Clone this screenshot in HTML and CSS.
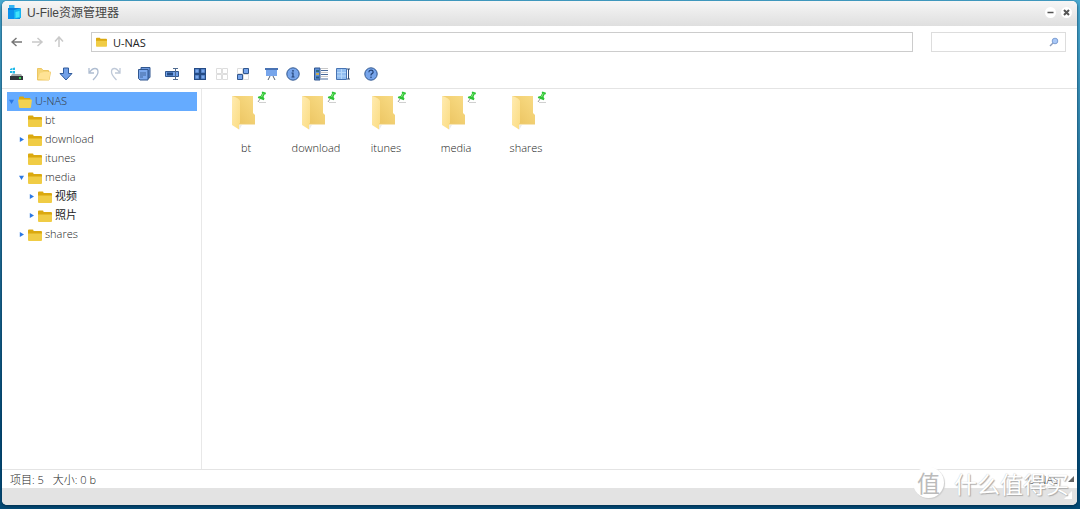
FILE: index.html
```html
<!DOCTYPE html>
<html lang="zh-CN">
<head>
<meta charset="utf-8">
<title>U-File资源管理器</title>
<link rel="stylesheet" href="styles.css">
</head>
<body>
<svg class="defs" aria-hidden="true">
  <linearGradient id="gFlap" x1="0" y1="0" x2="1" y2="1"><stop offset="0" stop-color="#ffebb0"/><stop offset="1" stop-color="#fbdc82"/></linearGradient>
  <linearGradient id="gBack" x1="0" y1="1" x2="1" y2="0"><stop offset="0" stop-color="#eac25d"/><stop offset="1" stop-color="#f9dc86"/></linearGradient>
  <symbol id="folder" viewBox="0 0 14 12"><path d="M0 1.500q0-1 1-1h3.500q1 0 1 1V2h7.500q1 0 1 1v2H0z" fill="#dba90f"/><path d="M0 4.500h14V11q0 1-1 1H1q-1 0-1-1z" fill="#f0cc45"/></symbol>
  <symbol id="folder-open" viewBox="0 0 14 12"><path d="M1 2q0-1.500 1-1.500h3q1 0 1 1V2h5.500q1 0 1 1v3H1z" fill="#dba90f"/><path d="M0 4q0-.6 1-.6h12q1 0 .9.8l-.9 7q-.1.8-1 .8H2q-.8 0-1-.8z" fill="#f3d251"/></symbol>
  <symbol id="big-folder" viewBox="0 0 26 36"><path d="M7 30l1 5 3-5z" fill="#ececec"/><path d="M1 1h21v17l2 2v9H7z" fill="url(#gBack)"/><path d="M1 1q7 2 8 5v22l-1 2v4.500L1 30z" fill="url(#gFlap)"/><path d="M8 29h16" stroke="#efcd74"/></symbol>
  <symbol id="pin" viewBox="0 0 10 12"><path d="M2 11.500h7" stroke="#d0d0d0"/><path d="M3 8L1 11" stroke="#999"/><path d="M5.500.5L9 1.700l-.3 1.600-1.200.2-1 2.500 1 1.400-.7 1.800L.8 7l.5-1.600L3.600 5l1.500-2.700-.4-.7z" fill="#2fc336"/><path d="M6.200 2.500L4.500 6" stroke="#8cef82"/></symbol>
</svg>
<div class="window">
  <header class="titlebar">
    <svg class="app-icon" width="15" height="15" viewBox="0 0 15 15"><path d="M2 0h5.500v4H2z" fill="#35b4f2"/><path d="M1 3h12v11H1z" fill="#0a7fda"/><path d="M1 5h7v9H1z" fill="#0b93ee"/><path d="M7 5l7-2v10l-7 1z" fill="#14b3f2"/><path d="M8.500 7l4-1v6l-4 1z" fill="#42e4fb"/></svg>
    <h1 class="title">U-File资源管理器</h1>
    <button class="win-btn" aria-label="最小化"><svg width="11" height="11"><path d="M2.500 5.500h6" stroke="#555" stroke-width="1.500"/></svg></button>
    <button class="win-btn" aria-label="关闭"><svg width="11" height="11"><path d="M3 3l5 5M8 3l-5 5" stroke="#555" stroke-width="2"/></svg></button>
  </header>

  <nav class="navbar">
    <button class="nav-btn" aria-label="后退"><svg width="12" height="12" fill="none" stroke="#777" stroke-width="1.500"><path d="M1 6h10M5.500 2L1 6l4.500 4"/></svg></button>
    <button class="nav-btn" aria-label="前进"><svg width="12" height="12" fill="none" stroke="#c9c9c9" stroke-width="1.500"><path d="M0 6h10M5.500 2L10 6l-4.500 4"/></svg></button>
    <button class="nav-btn" aria-label="向上"><svg width="12" height="12" fill="none" stroke="#c9c9c9" stroke-width="1.500"><path d="M6 1v10M2 5.500L6 1l4 4.500"/></svg></button>
    <div class="address"><svg width="11" height="10"><use href="#folder"/></svg><input class="address-input" type="text" value="U-NAS" aria-label="地址"></div>
    <div class="search"><input class="search-input" type="search" aria-label="搜索"><svg width="10" height="10"><path d="M1 9l3-3" stroke="#8d9dbb" stroke-width="1.500"/><circle cx="6" cy="4" r="2.800" fill="#a9c8f7" stroke="#7d9fd4"/></svg></div>
  </nav>

  <div class="toolbar" role="toolbar" aria-label="工具栏">
    <div class="group"><button class="tool" aria-label="驱动器"><svg width="16" height="16"><path d="M2 3l2-1v2H2zM4.500 2L7 1.500V4H4.500zM2 5h2v2H2zM4.500 5H7v2.500H4.500z" fill="#20b9e8"/><path d="M4 8h9l2 3H2z" fill="#a3a8aa"/><path d="M2 10h13v4H2z" fill="#30363a"/><path d="M11 12h2" stroke="#38d652" stroke-width="2"/></svg></button></div>
    <div class="group">
      <button class="tool" aria-label="新建文件夹"><svg width="16" height="16"><path d="M1.500 14V2.500h4l1.500 2h5.500V6h2L13 14z" fill="#f5d679" stroke="#edc661"/><path d="M2 13L4 7l4-1 6.500 0L13 14z" fill="#ffe395"/></svg></button>
      <button class="tool" aria-label="下载"><svg width="16" height="16"><path d="M5.500 2v5.500H2L8 14l6-6.500h-3.500V2z" fill="#73a1e8" stroke="#315b9b" stroke-linejoin="round"/></svg></button>
    </div>
    <div class="group">
      <button class="tool" aria-label="撤销"><svg width="16" height="16" fill="none" stroke="#afbdd1" stroke-width="1.300"><path d="M3 2v5h5M3.500 6.500Q6 2.500 9 2.500q3 0 3 3.500 0 3-5 8"/></svg></button>
      <button class="tool" aria-label="重做"><svg width="16" height="16" fill="none" stroke="#bfc9d8" stroke-width="1.300"><path d="M12 2v5H7M11.500 6.500Q9 2.500 6.500 2.500q-3 0-3 3.500 0 3 5 8"/></svg></button>
    </div>
    <div class="group"><button class="tool" aria-label="复制"><svg width="16" height="16"><path d="M5 1.500h9v10l-2 1V4H5z" fill="#6d98df" stroke="#31578f"/><path d="M2.500 3.500h9.500v10.500H4l-1.500-1.500z" fill="#7ba8ee" stroke="#31578f"/><path d="M4 7h6M4 9h6M4 11h3" stroke="#44699f"/></svg></button></div>
    <div class="group"><button class="tool" aria-label="重命名"><svg width="16" height="16"><path d="M1.500 5.500h13v5h-13z" fill="#75a4ea" stroke="#31578f"/><path d="M3 8h6" stroke="#234b85" stroke-width="3"/><path d="M9 2.500h5M11.500 2v12M9 13.500h5" stroke="#506b90"/></svg></button></div>
    <div class="group">
      <button class="tool" aria-label="全选"><svg width="16" height="16"><path d="M2 2h12v12H2z" fill="#244b86"/><path d="M3.500 3.500h3v3h-3zM9.500 3.500h3v3h-3zM3.500 9.500h3v3h-3zM9.500 9.500h3v3h-3z" fill="#77a5eb" stroke="#5b89cd"/></svg></button>
      <button class="tool" aria-label="取消选择"><svg width="16" height="16" fill="#fff" stroke="#dddddd"><path d="M2.500 2.500h5v5h-5zM8.500 2.500h5v5h-5zM2.500 8.500h5v5h-5zM8.500 8.500h5v5h-5z"/></svg></button>
      <button class="tool" aria-label="反选"><svg width="16" height="16"><path d="M1.500 2.500h5v5h-5zM7.500 8.500h5v5h-5z" fill="#fff" stroke="#ddd"/><path d="M7.500 2.500h5v5h-5zM1.500 8.500h5v5h-5z" fill="#77a5eb" stroke="#31578f"/></svg></button>
    </div>
    <div class="group">
      <button class="tool" aria-label="预览"><svg width="16" height="16"><path d="M2 3h11v7H2z" fill="#77a5eb"/><path d="M1 3h13" stroke="#4973b4" stroke-width="2"/><path d="M6 10l-2 4M9 10l2 4" stroke="#555f70"/></svg></button>
      <button class="tool" aria-label="信息"><svg width="16" height="16"><circle cx="7" cy="8" r="6.200" fill="#77a5eb" stroke="#31578f"/><path d="M5.500 7h1.500v4M5.500 11h3" fill="none" stroke="#234275" stroke-width="1.200"/><circle cx="7" cy="4.800" r=".9" fill="#234275"/></svg></button>
    </div>
    <div class="group">
      <button class="tool" aria-label="列表视图"><svg width="16" height="16"><path d="M.5 2h5.500v12H.5z" fill="#5e8fd6" stroke="#31578f"/><path d="M2 4h3v2H2z" fill="#2f6b82"/><path d="M2 7h3v2H2z" fill="#c5a952"/><path d="M2 10.500h3v2H2z" fill="#255b86"/><path d="M7 2.500h7M7 6.500h7M7 10.500h7" stroke="#c9c9c9"/><path d="M7 4.500h7M7 8.500h7M7 13h7" stroke="#496a99"/></svg></button>
      <button class="tool" aria-label="排序"><svg width="16" height="16"><path d="M.5 2.500h10v11H.5z" fill="#91bdf0" stroke="#4874b3"/><path d="M5.500 3v10M1 6.500h9M1 10h9" stroke="#b5d7fa"/><path d="M12.500 3v10M11 3h3M11 13h3" stroke="#344e75"/></svg></button>
    </div>
    <div class="group"><button class="tool" aria-label="帮助"><svg width="16" height="16"><circle cx="7" cy="8" r="6.200" fill="#77a5eb" stroke="#31578f"/><path d="M4.800 6.200q.2-2 2.200-2t2.200 1.800Q9.200 7 8 7.600T7 9.500" fill="none" stroke="#234275" stroke-width="1.200"/><circle cx="7" cy="11.300" r=".8" fill="#234275"/></svg></button></div>
  </div>

  <div class="content">
    <aside class="sidebar">
      <ul class="tree">
        <li class="node root"><svg class="arrow" viewBox="0 0 6 6"><path d="M0 1h6L3 6z"/></svg><svg class="icon"><use href="#folder-open"/></svg><span>U-NAS</span></li>
        <li class="node level-1"><span class="arrow"></span><svg class="icon"><use href="#folder"/></svg><span>bt</span></li>
        <li class="node level-1"><svg class="arrow" viewBox="0 0 6 6"><path d="M1 0v6l5-3z"/></svg><svg class="icon"><use href="#folder"/></svg><span>download</span></li>
        <li class="node level-1"><span class="arrow"></span><svg class="icon"><use href="#folder"/></svg><span>itunes</span></li>
        <li class="node level-1"><svg class="arrow" viewBox="0 0 6 6"><path d="M0 1h6L3 6z"/></svg><svg class="icon"><use href="#folder"/></svg><span>media</span></li>
        <li class="node level-2"><svg class="arrow" viewBox="0 0 6 6"><path d="M1 0v6l5-3z"/></svg><svg class="icon"><use href="#folder"/></svg><span>视频</span></li>
        <li class="node level-2"><svg class="arrow" viewBox="0 0 6 6"><path d="M1 0v6l5-3z"/></svg><svg class="icon"><use href="#folder"/></svg><span>照片</span></li>
        <li class="node level-1"><svg class="arrow" viewBox="0 0 6 6"><path d="M1 0v6l5-3z"/></svg><svg class="icon"><use href="#folder"/></svg><span>shares</span></li>
      </ul>
    </aside>
    <main class="files">
      <div class="file"><div class="thumb"><svg class="big"><use href="#big-folder"/></svg><svg class="pin"><use href="#pin"/></svg></div><span>bt</span></div>
      <div class="file"><div class="thumb"><svg class="big"><use href="#big-folder"/></svg><svg class="pin"><use href="#pin"/></svg></div><span>download</span></div>
      <div class="file"><div class="thumb"><svg class="big"><use href="#big-folder"/></svg><svg class="pin"><use href="#pin"/></svg></div><span>itunes</span></div>
      <div class="file"><div class="thumb"><svg class="big"><use href="#big-folder"/></svg><svg class="pin"><use href="#pin"/></svg></div><span>media</span></div>
      <div class="file"><div class="thumb"><svg class="big"><use href="#big-folder"/></svg><svg class="pin"><use href="#pin"/></svg></div><span>shares</span></div>
    </main>
  </div>

  <footer class="status">
    <span>项目: 5</span><span>大小: 0 b</span><span class="path">U-NAS</span>
    <svg width="6" height="6"><path d="M6 0v6H0z" fill="#666"/></svg>
  </footer>
  <div class="base"><svg width="8" height="8"><path d="M8 0v8H0z" fill="#fff"/></svg></div>
</div>
<div class="watermark"><span class="seal">值</span><span>什么值得买</span></div>
</body>
</html>
```
FILE: styles.css
```css
* { box-sizing: border-box; }
body {
  margin: 0;
  height: 100vh;
  padding: 1px 3px 4px 2px;
  display: flex;
  background: linear-gradient(#49a9d0, #2b7ba3 35%, #044a75 85%);
  font: 300 11px/19px "Open Sans", "Noto Sans CJK SC", sans-serif;
  color: #222;
}
button { padding: 0; border: 0; background: none; display: flex; align-items: center; justify-content: center; }
input { border: 0; outline: 0; padding: 0; background: none; font: inherit; color: inherit; min-width: 0; }
svg { display: block; flex: none; }
.defs { position: absolute; width: 0; height: 0; }
.window {
  flex: 1;
  display: flex;
  flex-direction: column;
  background: #fff;
  border-radius: 5px;
  overflow: hidden;
  box-shadow: 0 1px 3px #002c4a;
}
.titlebar {
  display: flex;
  align-items: center;
  height: 25px;
  padding: 0 5px 2px 5px;
  gap: 5px;
  background: linear-gradient(#f6f6f6, #dfdfdf);
}
.title { flex: 1; margin: 0; font: 400 12px/20px "Liberation Sans", "Noto Sans CJK SC", sans-serif; color: #444; }
.win-btn { width: 11px; height: 11px; border-radius: 50%; background: #fff; }
.navbar { display: flex; align-items: center; padding: 6px 11px 0 9px; height: 26px; }
.nav-btn { width: 12px; height: 18px; margin-right: 9px; }
.address, .search { display: flex; align-items: center; height: 20px; border: 1px solid #ccc; }
.address { flex: 1; margin-left: 17px; padding-left: 4px; gap: 6px; font-weight: 400; }
.address-input { flex: 1; }
.search { width: 135px; margin-left: 18px; padding-right: 6px; border-color: #ddd; }
.search-input { flex: 1; appearance: none; }
.toolbar { display: flex; gap: 12px; height: 37px; padding: 14px 6px 6px; border-bottom: 1px solid #e4e4e4; }
.group { display: flex; gap: 6px; }
.tool { width: 16px; height: 16px; }
.content { flex: 1; display: flex; min-height: 0; }
.sidebar { width: 200px; padding: 3px 4px 3px 5px; border-right: 1px solid #e8e8e8; }
.tree { list-style: none; margin: 0; padding: 0; }
.node { display: flex; align-items: center; height: 19px; }
.node span { line-height: 18px; margin-bottom: 1px; }
.root { padding-left: 2px; background: #65abff; color: #333; }
.level-1 { padding-left: 12px; }
.level-2 { padding-left: 22px; font-weight: 400; }
.arrow { width: 5px; height: 5px; margin-right: 4px; fill: #2b78e4; }
.icon { width: 14px; height: 12px; margin-right: 3px; }
.files { flex: 1; display: flex; flex-wrap: wrap; align-content: flex-start; padding: 2px 9px; }
.file { width: 70px; display: flex; flex-direction: column; align-items: center; }
.thumb { display: flex; width: 70px; padding-left: 20px; height: 47px; }
.big { width: 26px; height: 36px; margin-top: 4px; }
.pin { width: 10px; height: 12px; }
.status { display: flex; align-items: center; gap: 9px; height: 19px; padding: 0 3px 0 8px; border-top: 1px solid #e4e4e4; }
.path { margin-left: auto; }
.base { display: flex; justify-content: flex-end; height: 17px; padding: 3px 5px; background: #e3e3e3; }
.watermark {
  position: absolute;
  right: 11px;
  bottom: 11px;
  display: flex;
  align-items: center;
  gap: 10px;
  font: 400 23px/30px "Noto Sans CJK SC", sans-serif;
  color: #fff;
  text-shadow: 1px 1px 1px #aaa, 0 0 1px #bbb;
}
.seal {
  width: 31px;
  height: 31px;
  border-radius: 50%;
  background: #fff;
  color: #bbb;
  text-align: center;
  text-shadow: none;
  box-shadow: 1px 1px 1px #ccc;
}
```
